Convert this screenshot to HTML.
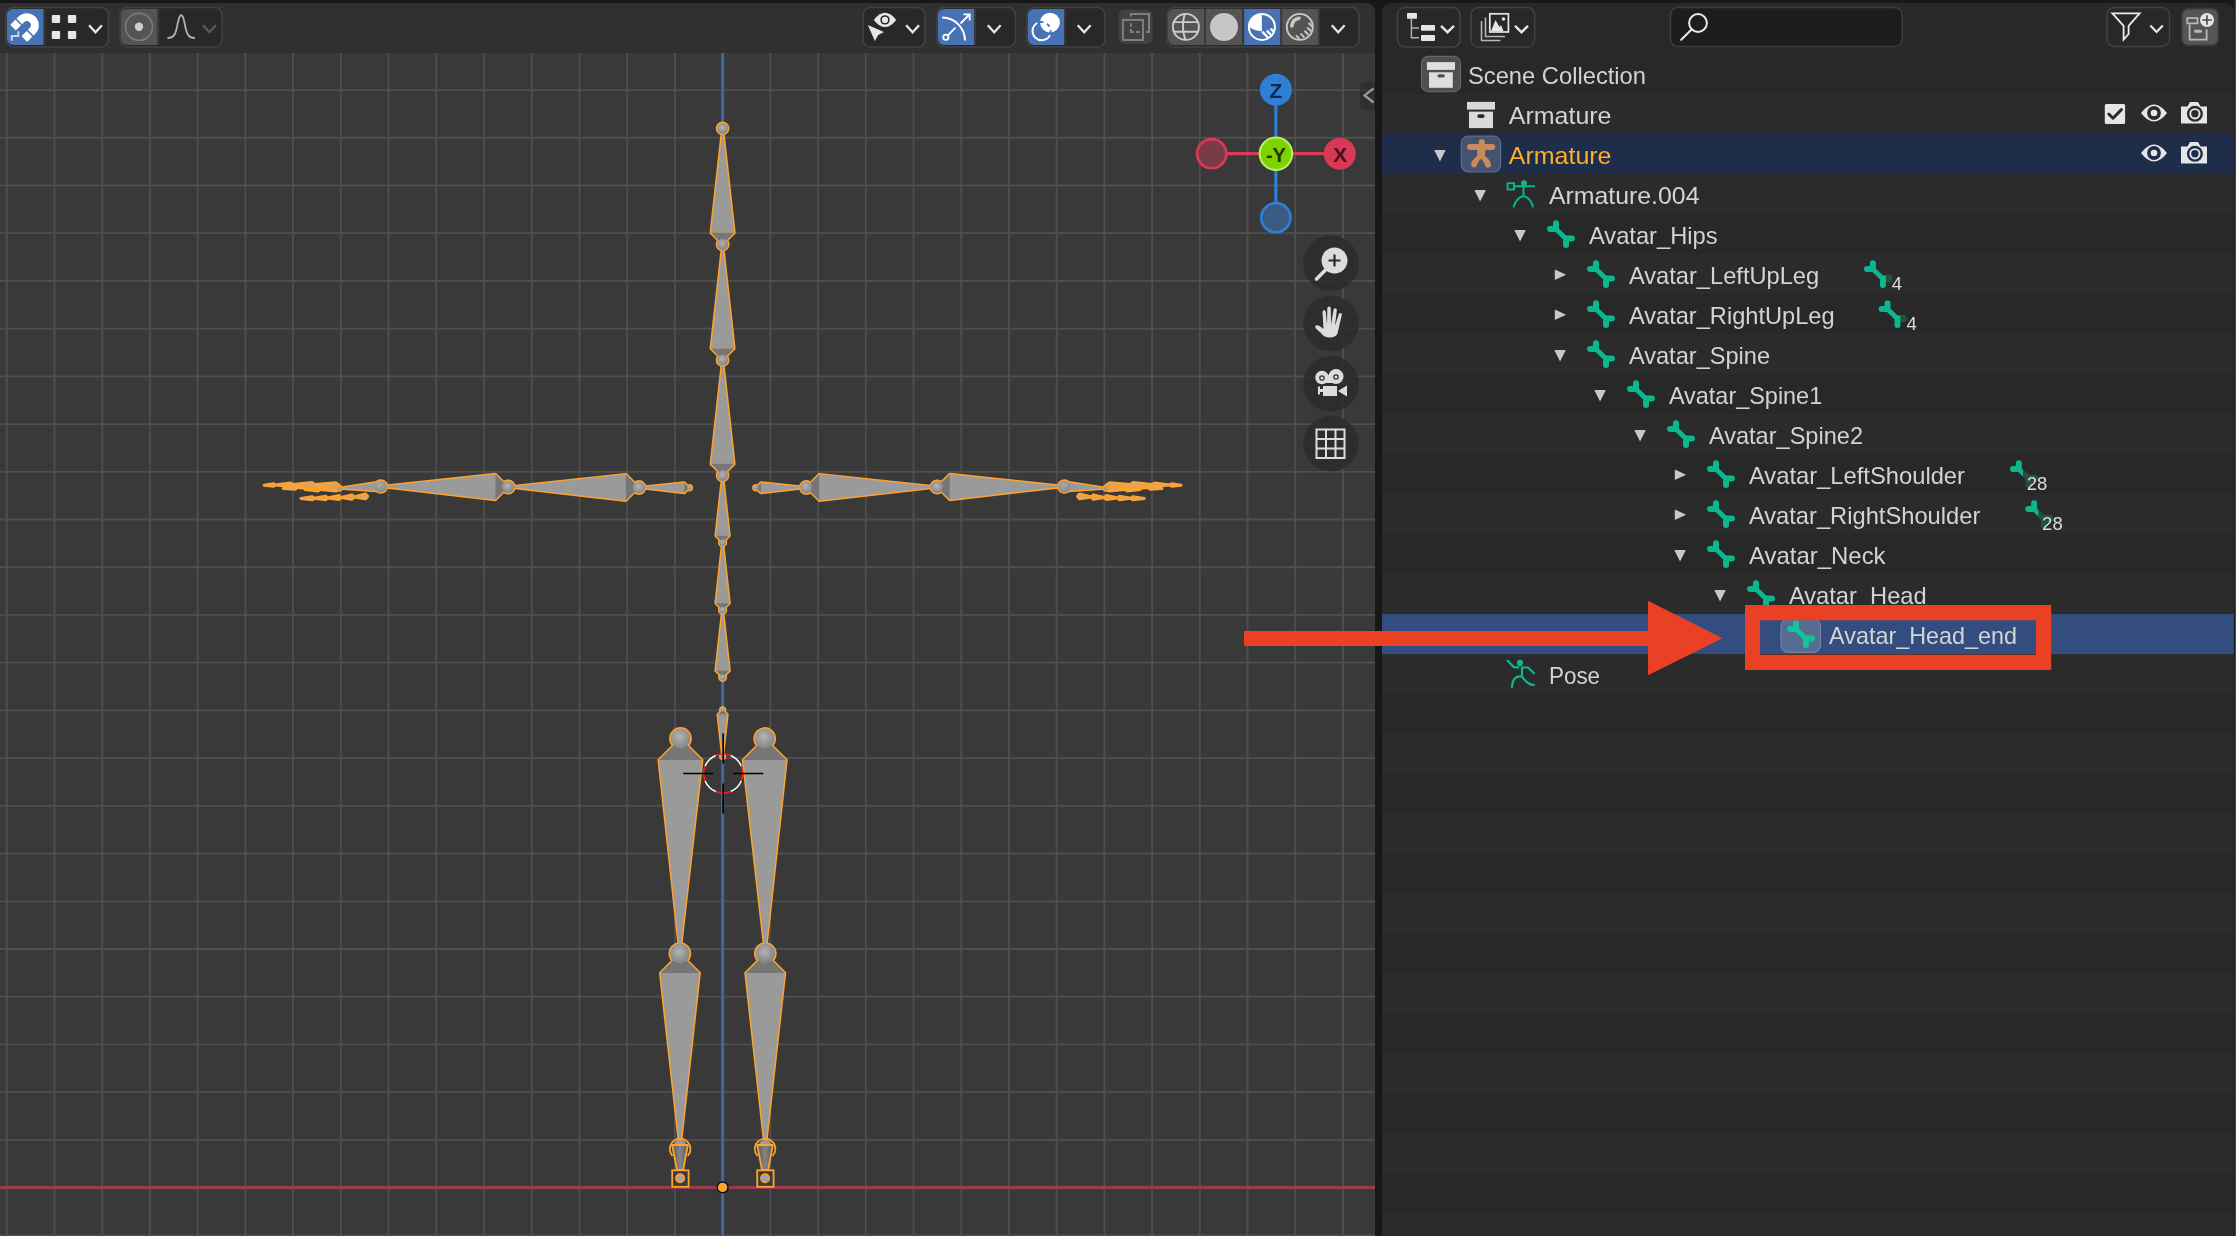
<!DOCTYPE html><html><head><meta charset="utf-8"><title>Blender Outliner</title><style>
html,body{margin:0;padding:0;width:2236px;height:1236px;overflow:hidden;background:#181818;}
svg{position:absolute;left:0;top:0;display:block}
text{font-family:"Liberation Sans",sans-serif;}
.gt{will-change:transform;opacity:0.999}
</style></head><body>
<svg width="2236" height="1236" viewBox="0 0 2236 1236">
<defs>
<clipPath id="vpclip"><rect x="0" y="53" width="1375" height="1183"/></clipPath>
<radialGradient id="joint" cx="0.45" cy="0.4" r="0.6"><stop offset="0" stop-color="#b4b4b4"/><stop offset="1" stop-color="#858585"/></radialGradient>
</defs>
<rect x="0" y="0" width="2236" height="1236" fill="#181818"/>
<path d="M0,3 H1366 A9,9 0 0 1 1375,12 V1236 H0 Z" fill="#393939"/>
<g clip-path="url(#vpclip)">
<path d="M6.8,53V1236M54.52,53V1236M102.24,53V1236M149.96,53V1236M197.68,53V1236M245.4,53V1236M293.12,53V1236M340.84,53V1236M388.56,53V1236M436.28,53V1236M484,53V1236M531.72,53V1236M579.44,53V1236M627.16,53V1236M674.88,53V1236M722.6,53V1236M770.32,53V1236M818.04,53V1236M865.76,53V1236M913.48,53V1236M961.2,53V1236M1008.92,53V1236M1056.64,53V1236M1104.36,53V1236M1152.08,53V1236M1199.8,53V1236M1247.52,53V1236M1295.24,53V1236M1342.96,53V1236M0,90.04H1375M0,137.76H1375M0,185.48H1375M0,233.2H1375M0,280.92H1375M0,328.64H1375M0,376.36H1375M0,424.08H1375M0,471.8H1375M0,519.52H1375M0,567.24H1375M0,614.96H1375M0,662.68H1375M0,710.4H1375M0,758.12H1375M0,805.84H1375M0,853.56H1375M0,901.28H1375M0,949H1375M0,996.72H1375M0,1044.44H1375M0,1092.16H1375M0,1139.88H1375M0,1187.6H1375M0,1235.32H1375" stroke="#4f4f4f" stroke-width="1.8" fill="none"/>
<line x1="722.6" y1="53" x2="722.6" y2="1236" stroke="#3b6aa3" stroke-width="3"/>
<line x1="0" y1="1187.6" x2="1375" y2="1187.6" stroke="#9c3b4e" stroke-width="3"/>
</g>
<g fill="#ffa22e" stroke="#ffa22e" stroke-width="3.0" stroke-linejoin="round">
<polygon points="722.6,677.3 729.33,670.57 722.6,610 715.87,670.57"/><circle cx="722.6" cy="677.3" r="3.1"/><circle cx="722.6" cy="610" r="3.1"/><polygon points="722.6,610 729.35,603.25 722.6,542.5 715.85,603.25"/><circle cx="722.6" cy="610" r="3.1"/><circle cx="722.6" cy="542.5" r="3.1"/><polygon points="722.6,542.5 729.31,535.79 722.6,475.4 715.89,535.79"/><circle cx="722.6" cy="542.5" r="3.09"/><circle cx="722.6" cy="475.4" r="3.09"/><polygon points="722.6,475.4 734.14,463.86 722.6,360 711.06,463.86"/><circle cx="722.6" cy="475.4" r="5.31"/><circle cx="722.6" cy="360" r="5.31"/><polygon points="722.6,360 734.16,348.44 722.6,244.4 711.04,348.44"/><circle cx="722.6" cy="360" r="5.32"/><circle cx="722.6" cy="244.4" r="5.32"/><polygon points="722.6,244.4 734.2,232.8 722.6,128.4 711,232.8"/><circle cx="722.6" cy="244.4" r="5.34"/><circle cx="722.6" cy="128.4" r="5.34"/><polygon points="722.6,709.8 717.95,714.45 722.6,756.3 727.25,714.45"/><circle cx="722.6" cy="709.8" r="2.14"/><circle cx="722.6" cy="756.3" r="2.14"/><polygon points="689.3,487.8 684.29,482.73 638.9,487.5 684.23,492.81"/><circle cx="689.3" cy="487.8" r="2.32"/><circle cx="638.9" cy="487.5" r="2.32"/><polygon points="755.9,487.8 760.97,492.81 806.3,487.5 760.91,482.73"/><circle cx="755.9" cy="487.8" r="2.32"/><circle cx="806.3" cy="487.5" r="2.32"/><polygon points="638.9,487.5 625.87,474.37 508.1,487 625.77,500.53"/><circle cx="638.9" cy="487.5" r="6.02"/><circle cx="508.1" cy="487" r="6.02"/><polygon points="806.3,487.5 819.43,500.53 937.1,487 819.33,474.37"/><circle cx="806.3" cy="487.5" r="6.02"/><circle cx="937.1" cy="487" r="6.02"/><polygon points="508.1,487 495.42,474.22 380.8,486.5 495.32,499.68"/><circle cx="508.1" cy="487" r="5.86"/><circle cx="380.8" cy="486.5" r="5.86"/><polygon points="937.1,487 949.88,499.68 1064.4,486.5 949.78,474.22"/><circle cx="937.1" cy="487" r="5.86"/><circle cx="1064.4" cy="486.5" r="5.86"/><polygon points="380.8,486.5 376.47,482.53 339.3,488.3 376.83,490.83"/><circle cx="380.8" cy="486.5" r="1.91"/><circle cx="339.3" cy="488.3" r="1.91"/><polygon points="1064.4,486.5 1068.37,490.83 1105.9,488.3 1068.73,482.53"/><circle cx="1064.4" cy="486.5" r="1.91"/><circle cx="1105.9" cy="488.3" r="1.91"/><polygon points="680.5,738.5 658.93,759.95 679.9,953.6 701.95,760.07"/><circle cx="680.5" cy="738.5" r="9.89"/><circle cx="679.9" cy="953.6" r="9.89"/><polygon points="764.7,738.5 743.25,760.07 765.3,953.6 786.27,759.95"/><circle cx="764.7" cy="738.5" r="9.89"/><circle cx="765.3" cy="953.6" r="9.89"/><polygon points="679.9,953.6 660.42,973.1 680,1148.5 699.4,973.08"/><circle cx="679.9" cy="953.6" r="8.97"/><polygon points="765.3,953.6 745.8,973.08 765.2,1148.5 784.78,973.1"/><circle cx="765.3" cy="953.6" r="8.97"/>
<polygon points="1106,485.3 1109.6,482.8 1130,484.6 1109.6,487.59"/>
<polygon points="339.2,485.3 335.6,482.8 315.2,484.6 335.6,487.59"/>
<polygon points="1130,484.6 1133.3,482.5 1152,484.6 1133.3,486.7"/>
<polygon points="315.2,484.6 311.9,482.5 293.2,484.6 311.9,486.7"/>
<polygon points="1152,484.6 1154.7,482.96 1170,485 1154.7,486.36"/>
<polygon points="293.2,484.6 290.5,482.96 275.2,485 290.5,486.36"/>
<polygon points="1170,485 1171.65,483.85 1181,485.3 1171.65,486.25"/>
<polygon points="275.2,485 273.55,483.85 264.2,485.3 273.55,486.25"/>
<polygon points="1106,487.6 1109.3,485.04 1128,487.2 1109.3,490.04"/>
<polygon points="339.2,487.6 335.9,485.04 317.2,487.2 335.9,490.04"/>
<polygon points="1128,487.2 1131,485.16 1148,487.6 1131,489.36"/>
<polygon points="317.2,487.2 314.2,485.16 297.2,487.6 314.2,489.36"/>
<polygon points="1148,487.6 1150.1,486.12 1162,488.4 1150.1,489.32"/>
<polygon points="297.2,487.6 295.1,486.12 283.2,488.4 295.1,489.32"/>
<polygon points="1106,489.2 1108.85,487.46 1125,489.6 1108.85,491.06"/>
<polygon points="339.2,489.2 336.35,487.46 320.2,489.6 336.35,491.06"/>
<polygon points="1125,489.6 1127.25,488.2 1140,489.6 1127.25,491"/>
<polygon points="320.2,489.6 317.95,488.2 305.2,489.6 317.95,491"/>
<polygon points="1077.5,496.2 1079.59,493.92 1091.4,497 1079.59,498.72"/>
<polygon points="367.7,496.2 365.62,493.92 353.8,497 365.62,498.72"/>
<polygon points="1091.4,497 1093.32,494.88 1104.2,497.5 1093.32,499.27"/>
<polygon points="353.8,497 351.88,494.88 341,497.5 351.88,499.27"/>
<polygon points="1104.2,497.5 1106.21,495.57 1117.6,498 1106.21,499.57"/>
<polygon points="341,497.5 338.99,495.57 327.6,498 338.99,499.57"/>
<polygon points="1117.6,498 1119.6,496.23 1130.9,498.2 1119.6,499.83"/>
<polygon points="327.6,498 325.61,496.23 314.3,498.2 325.61,499.83"/>
<polygon points="1130.9,498.2 1132.91,496.73 1144.3,498.4 1132.91,499.73"/>
<polygon points="314.3,498.2 312.29,496.73 300.9,498.4 312.29,499.73"/>
</g>
<polygon points="729.33,670.57 722.6,610 715.87,670.57" fill="#9a9a9a"/><polygon points="722.6,677.3 729.33,670.57 715.87,670.57" fill="#767676"/><polygon points="729.35,603.25 722.6,542.5 715.85,603.25" fill="#9a9a9a"/><polygon points="722.6,610 729.35,603.25 715.85,603.25" fill="#767676"/><polygon points="729.31,535.79 722.6,475.4 715.89,535.79" fill="#9a9a9a"/><polygon points="722.6,542.5 729.31,535.79 715.89,535.79" fill="#767676"/><polygon points="734.14,463.86 722.6,360 711.06,463.86" fill="#9a9a9a"/><polygon points="722.6,475.4 734.14,463.86 711.06,463.86" fill="#767676"/><polygon points="734.16,348.44 722.6,244.4 711.04,348.44" fill="#9a9a9a"/><polygon points="722.6,360 734.16,348.44 711.04,348.44" fill="#767676"/><polygon points="734.2,232.8 722.6,128.4 711,232.8" fill="#9a9a9a"/><polygon points="722.6,244.4 734.2,232.8 711,232.8" fill="#767676"/><polygon points="717.95,714.45 722.6,756.3 727.25,714.45" fill="#9a9a9a"/><polygon points="722.6,709.8 717.95,714.45 727.25,714.45" fill="#767676"/><polygon points="684.29,482.73 638.9,487.5 684.23,492.81" fill="#9a9a9a"/><polygon points="689.3,487.8 684.29,482.73 684.23,492.81" fill="#767676"/><polygon points="760.97,492.81 806.3,487.5 760.91,482.73" fill="#9a9a9a"/><polygon points="755.9,487.8 760.97,492.81 760.91,482.73" fill="#767676"/><polygon points="625.87,474.37 508.1,487 625.77,500.53" fill="#9a9a9a"/><polygon points="638.9,487.5 625.87,474.37 625.77,500.53" fill="#767676"/><polygon points="819.43,500.53 937.1,487 819.33,474.37" fill="#9a9a9a"/><polygon points="806.3,487.5 819.43,500.53 819.33,474.37" fill="#767676"/><polygon points="495.42,474.22 380.8,486.5 495.32,499.68" fill="#9a9a9a"/><polygon points="508.1,487 495.42,474.22 495.32,499.68" fill="#767676"/><polygon points="949.88,499.68 1064.4,486.5 949.78,474.22" fill="#9a9a9a"/><polygon points="937.1,487 949.88,499.68 949.78,474.22" fill="#767676"/><polygon points="376.47,482.53 339.3,488.3 376.83,490.83" fill="#9a9a9a"/><polygon points="380.8,486.5 376.47,482.53 376.83,490.83" fill="#767676"/><polygon points="1068.37,490.83 1105.9,488.3 1068.73,482.53" fill="#9a9a9a"/><polygon points="1064.4,486.5 1068.37,490.83 1068.73,482.53" fill="#767676"/><polygon points="658.93,759.95 679.9,953.6 701.95,760.07" fill="#9a9a9a"/><polygon points="680.5,738.5 658.93,759.95 701.95,760.07" fill="#767676"/><polygon points="743.25,760.07 765.3,953.6 786.27,759.95" fill="#9a9a9a"/><polygon points="764.7,738.5 743.25,760.07 786.27,759.95" fill="#767676"/><polygon points="660.42,973.1 680,1148.5 699.4,973.08" fill="#9a9a9a"/><polygon points="679.9,953.6 660.42,973.1 699.4,973.08" fill="#767676"/><polygon points="745.8,973.08 765.2,1148.5 784.78,973.1" fill="#9a9a9a"/><polygon points="765.3,953.6 745.8,973.08 784.78,973.1" fill="#767676"/>
<g fill="url(#joint)"><circle cx="722.6" cy="677.3" r="3.1"/><circle cx="722.6" cy="610" r="3.1"/><circle cx="722.6" cy="610" r="3.1"/><circle cx="722.6" cy="542.5" r="3.1"/><circle cx="722.6" cy="542.5" r="3.09"/><circle cx="722.6" cy="475.4" r="3.09"/><circle cx="722.6" cy="475.4" r="5.31"/><circle cx="722.6" cy="360" r="5.31"/><circle cx="722.6" cy="360" r="5.32"/><circle cx="722.6" cy="244.4" r="5.32"/><circle cx="722.6" cy="244.4" r="5.34"/><circle cx="722.6" cy="128.4" r="5.34"/><circle cx="722.6" cy="709.8" r="2.14"/><circle cx="722.6" cy="756.3" r="2.14"/><circle cx="689.3" cy="487.8" r="2.32"/><circle cx="638.9" cy="487.5" r="2.32"/><circle cx="755.9" cy="487.8" r="2.32"/><circle cx="806.3" cy="487.5" r="2.32"/><circle cx="638.9" cy="487.5" r="6.02"/><circle cx="508.1" cy="487" r="6.02"/><circle cx="806.3" cy="487.5" r="6.02"/><circle cx="937.1" cy="487" r="6.02"/><circle cx="508.1" cy="487" r="5.86"/><circle cx="380.8" cy="486.5" r="5.86"/><circle cx="937.1" cy="487" r="5.86"/><circle cx="1064.4" cy="486.5" r="5.86"/><circle cx="380.8" cy="486.5" r="1.91"/><circle cx="339.3" cy="488.3" r="1.91"/><circle cx="1064.4" cy="486.5" r="1.91"/><circle cx="1105.9" cy="488.3" r="1.91"/><circle cx="680.5" cy="738.5" r="9.89"/><circle cx="679.9" cy="953.6" r="9.89"/><circle cx="764.7" cy="738.5" r="9.89"/><circle cx="765.3" cy="953.6" r="9.89"/><circle cx="679.9" cy="953.6" r="8.97"/><circle cx="765.3" cy="953.6" r="8.97"/></g>
<polygon points="1106,485.3 1109.6,484.12 1130,484.6 1109.6,486.27" fill="#a8a8a8" opacity="0.55"/>
<polygon points="339.2,485.3 335.6,484.12 315.2,484.6 335.6,486.27" fill="#a8a8a8" opacity="0.55"/>
<polygon points="1130,484.6 1133.3,483.66 1152,484.6 1133.3,485.55" fill="#a8a8a8" opacity="0.55"/>
<polygon points="315.2,484.6 311.9,483.66 293.2,484.6 311.9,485.55" fill="#a8a8a8" opacity="0.55"/>
<polygon points="1152,484.6 1154.7,483.9 1170,485 1154.7,485.43" fill="#a8a8a8" opacity="0.55"/>
<polygon points="293.2,484.6 290.5,483.9 275.2,485 290.5,485.43" fill="#a8a8a8" opacity="0.55"/>
<polygon points="1170,485 1171.65,484.5 1181,485.3 1171.65,485.59" fill="#a8a8a8" opacity="0.55"/>
<polygon points="275.2,485 273.55,484.5 264.2,485.3 273.55,485.59" fill="#a8a8a8" opacity="0.55"/>
<polygon points="1106,487.6 1109.3,486.42 1128,487.2 1109.3,488.67" fill="#a8a8a8" opacity="0.55"/>
<polygon points="339.2,487.6 335.9,486.42 317.2,487.2 335.9,488.67" fill="#a8a8a8" opacity="0.55"/>
<polygon points="1128,487.2 1131,486.31 1148,487.6 1131,488.2" fill="#a8a8a8" opacity="0.55"/>
<polygon points="317.2,487.2 314.2,486.31 297.2,487.6 314.2,488.2" fill="#a8a8a8" opacity="0.55"/>
<polygon points="1148,487.6 1150.1,487 1162,488.4 1150.1,488.44" fill="#a8a8a8" opacity="0.55"/>
<polygon points="297.2,487.6 295.1,487 283.2,488.4 295.1,488.44" fill="#a8a8a8" opacity="0.55"/>
<polygon points="1106,489.2 1108.85,488.45 1125,489.6 1108.85,490.07" fill="#a8a8a8" opacity="0.55"/>
<polygon points="339.2,489.2 336.35,488.45 320.2,489.6 336.35,490.07" fill="#a8a8a8" opacity="0.55"/>
<polygon points="1125,489.6 1127.25,488.97 1140,489.6 1127.25,490.23" fill="#a8a8a8" opacity="0.55"/>
<polygon points="320.2,489.6 317.95,488.97 305.2,489.6 317.95,490.23" fill="#a8a8a8" opacity="0.55"/>
<polygon points="1077.5,496.2 1079.59,495.24 1091.4,497 1079.59,497.4" fill="#a8a8a8" opacity="0.55"/>
<polygon points="367.7,496.2 365.62,495.24 353.8,497 365.62,497.4" fill="#a8a8a8" opacity="0.55"/>
<polygon points="1091.4,497 1093.32,496.08 1104.2,497.5 1093.32,498.06" fill="#a8a8a8" opacity="0.55"/>
<polygon points="353.8,497 351.88,496.08 341,497.5 351.88,498.06" fill="#a8a8a8" opacity="0.55"/>
<polygon points="1104.2,497.5 1106.21,496.68 1117.6,498 1106.21,498.47" fill="#a8a8a8" opacity="0.55"/>
<polygon points="341,497.5 338.99,496.68 327.6,498 338.99,498.47" fill="#a8a8a8" opacity="0.55"/>
<polygon points="1117.6,498 1119.6,497.22 1130.9,498.2 1119.6,498.84" fill="#a8a8a8" opacity="0.55"/>
<polygon points="327.6,498 325.61,497.22 314.3,498.2 325.61,498.84" fill="#a8a8a8" opacity="0.55"/>
<polygon points="1130.9,498.2 1132.91,497.55 1144.3,498.4 1132.91,498.9" fill="#a8a8a8" opacity="0.55"/>
<polygon points="314.3,498.2 312.29,497.55 300.9,498.4 312.29,498.9" fill="#a8a8a8" opacity="0.55"/>
<linearGradient id="footg" x1="0" x2="1" y1="0" y2="0"><stop offset="0" stop-color="#5a5a5a"/><stop offset="0.5" stop-color="#858585"/><stop offset="1" stop-color="#5a5a5a"/></linearGradient>
<path d="M673.9,1145 A6.3,6.3 0 0 1 686.3,1145 Z" fill="#9a9a9a"/>
<path d="M672.55,1156 A10.3,10.3 0 1 1 687.65,1156" fill="none" stroke="#ffa22e" stroke-width="1.7"/>
<polygon points="672.2,1145 687.8,1145 683.2,1170 677,1170" fill="url(#footg)" stroke="#ffa22e" stroke-width="1.8" stroke-linejoin="round"/>
<rect x="672.2" y="1170.3" width="16.4" height="16.5" fill="#3c3c3c" stroke="#ffa22e" stroke-width="1.8"/>
<circle cx="680.1" cy="1178.3" r="4.3" fill="#a4a4a4" stroke="#ffa22e" stroke-width="1.4"/>
<path d="M758.9,1145 A6.3,6.3 0 0 1 771.3,1145 Z" fill="#9a9a9a"/>
<path d="M757.55,1156 A10.3,10.3 0 1 1 772.65,1156" fill="none" stroke="#ffa22e" stroke-width="1.7"/>
<polygon points="757.2,1145 772.8,1145 768.2,1170 762,1170" fill="url(#footg)" stroke="#ffa22e" stroke-width="1.8" stroke-linejoin="round"/>
<rect x="757.2" y="1170.3" width="16.4" height="16.5" fill="#3c3c3c" stroke="#ffa22e" stroke-width="1.8"/>
<circle cx="765.1" cy="1178.3" r="4.3" fill="#a4a4a4" stroke="#ffa22e" stroke-width="1.4"/>
<circle cx="722.6" cy="1187.4" r="5.4" fill="#ffa22e" stroke="#0c0c14" stroke-width="1.4"/>
<path d="M741.22,766.04 A19.5,19.5 0 0 1 741.22,780.96" stroke="#ff1e1e" stroke-width="1.5" fill="none"/><path d="M741.22,780.96 A19.5,19.5 0 0 1 730.66,791.52" stroke="#ffffff" stroke-width="1.5" fill="none"/><path d="M730.66,791.52 A19.5,19.5 0 0 1 715.74,791.52" stroke="#ff1e1e" stroke-width="1.5" fill="none"/><path d="M715.74,791.52 A19.5,19.5 0 0 1 705.18,780.96" stroke="#ffffff" stroke-width="1.5" fill="none"/><path d="M705.18,780.96 A19.5,19.5 0 0 1 705.18,766.04" stroke="#ff1e1e" stroke-width="1.5" fill="none"/><path d="M705.18,766.04 A19.5,19.5 0 0 1 715.74,755.48" stroke="#ffffff" stroke-width="1.5" fill="none"/><path d="M715.74,755.48 A19.5,19.5 0 0 1 730.66,755.48" stroke="#ff1e1e" stroke-width="1.5" fill="none"/><path d="M730.66,755.48 A19.5,19.5 0 0 1 741.22,766.04" stroke="#ffffff" stroke-width="1.5" fill="none"/>
<path d="M683.2,773.5H713.2M733.2,773.5H763.2M723.2,733.5V763.5M723.2,783.5V813.5" stroke="#000" stroke-width="1.6"/>
<line x1="1275.9" y1="89.8" x2="1275.9" y2="217.7" stroke="#2f7fd6" stroke-width="3.2"/>
<line x1="1211.7" y1="153.7" x2="1339.8" y2="153.7" stroke="#d83a55" stroke-width="3.2"/>
<circle cx="1211.7" cy="153.7" r="14.6" fill="#7a3a48" stroke="#d83a55" stroke-width="2.6"/>
<circle cx="1275.9" cy="217.7" r="14.6" fill="#3b5a82" stroke="#2f7fd6" stroke-width="2.6"/>
<circle cx="1275.9" cy="89.8" r="16" fill="#2f7fd6"/>
<circle cx="1339.8" cy="153.7" r="16" fill="#d83a55"/>
<circle cx="1275.9" cy="153.7" r="16.3" fill="#7fd400" stroke="#b5ef6e" stroke-width="2"/>
<text x="1275.9" y="97.8" font-size="21" font-weight="bold" fill="#0f2c4f" text-anchor="middle">Z</text>
<text x="1340" y="161.7" font-size="21" font-weight="bold" fill="#4d0f1a" text-anchor="middle">X</text>
<text x="1275.9" y="161.7" font-size="20" font-weight="bold" fill="#1f3500" text-anchor="middle">-Y</text>
<path d="M1375,82 H1365 A5,5 0 0 0 1360,87 V105 A5,5 0 0 0 1365,110 H1375 Z" fill="#262626" opacity="0.5"/>
<path d="M1373.6,88.3 L1364.6,95.4 L1373.6,102.5" stroke="#9a9a9a" stroke-width="2.3" fill="none"/>
<circle cx="1331" cy="263.2" r="27.8" fill="#2b2b2b" opacity="0.85"/>
<circle cx="1331" cy="323.6" r="27.8" fill="#2b2b2b" opacity="0.85"/>
<circle cx="1331" cy="383.8" r="27.8" fill="#2b2b2b" opacity="0.85"/>
<circle cx="1331" cy="443.6" r="27.8" fill="#2b2b2b" opacity="0.85"/>
<circle cx="1334.5" cy="260.5" r="13" fill="#dcdcdc"/>
<path d="M1328.5,260.5H1340.5M1334.5,254.5V266.5" stroke="#2b2b2b" stroke-width="2.2"/>
<line x1="1316.5" y1="279" x2="1325" y2="270.5" stroke="#dcdcdc" stroke-width="3.6" stroke-linecap="round"/>
<path d="M1321,333 C1316,329 1314,327 1316,325.5 C1318,324.5 1321,327 1323.5,329 L1322.5,312 C1322.5,309.5 1325.5,309.5 1325.8,312 L1327,325 L1327.3,308.5 C1327.5,305.8 1330.7,305.8 1330.8,308.5 L1331,324.5 L1333.5,310 C1334,307.5 1337,307.8 1336.8,310.3 L1335,325.5 L1338.8,314.5 C1339.6,312.2 1342.3,313 1341.7,315.3 L1337.5,333.5 C1335.5,338.8 1324.5,339 1321,333 Z" fill="#dcdcdc"/>
<circle cx="1322" cy="377.5" r="6.8" fill="#dcdcdc"/><circle cx="1336" cy="376.5" r="7.5" fill="#dcdcdc"/>
<rect x="1320" y="375" width="16" height="8" fill="#dcdcdc"/>
<circle cx="1322" cy="378" r="2.2" fill="none" stroke="#2b2b2b" stroke-width="1.2"/><circle cx="1336" cy="377" r="2.2" fill="none" stroke="#2b2b2b" stroke-width="1.2"/>
<rect x="1323" y="386" width="14" height="10" fill="#dcdcdc"/><rect x="1318.5" y="389" width="5" height="3" fill="#dcdcdc"/><rect x="1318" y="386.5" width="2" height="8" fill="#dcdcdc"/>
<polygon points="1338,391 1347,385.5 1347,396.5" fill="#dcdcdc"/>
<path d="M1316.5,429.5H1344.5V458H1316.5Z M1326,429.5V458 M1335.5,429.5V458 M1316.5,439H1344.5 M1316.5,448.5H1344.5" stroke="#dcdcdc" stroke-width="2" fill="none"/>
<path d="M0,3 H1366 A9,9 0 0 1 1375,12 V53 H0 Z" fill="#303030"/>
<rect x="6" y="7.5" width="102.5" height="39.5" rx="7.5" fill="#282828" stroke="#424242" stroke-width="1.6"/>
<path d="M13.2,9.0 H43.5 V45.0 H13.2 A6.2,6.2 0 0 1 7,38.8 V15.2 A6.2,6.2 0 0 1 13.2,9.0 Z" fill="#4772b3"/>
<rect x="43.5" y="9" width="1.8" height="36" fill="#3a3a3a"/>
<g transform="translate(26.8,25.2) rotate(135)" fill="#ffffff">
<path d="M0,-12 A12,12 0 0 0 0,12 L2.6,12 L2.6,4 L0,4 A4,4 0 0 1 0,-4 L2.6,-4 L2.6,-12 Z"/>
<rect x="4.1" y="-12" width="7.4" height="8" rx="0.6"/><rect x="4.1" y="4" width="7.4" height="8" rx="0.6"/>
</g>
<path d="M11.8,40.8 V36 H18.3 V31.3" stroke="#c5d2ea" stroke-width="2" fill="none"/>
<rect x="51.8" y="15.0" width="8.3" height="7.9" rx="0.8" fill="#e6e6e6"/>
<rect x="51.8" y="31.1" width="8.3" height="7.9" rx="0.8" fill="#e6e6e6"/>
<rect x="67.9" y="15.0" width="8.3" height="7.9" rx="0.8" fill="#e6e6e6"/>
<rect x="67.9" y="31.1" width="8.3" height="7.9" rx="0.8" fill="#e6e6e6"/>
<path d="M89.05,25.3 L95.5,32.2 L101.95,25.3" stroke="#e6e6e6" stroke-width="2.3" fill="none"/>
<rect x="120" y="7.5" width="102" height="39.5" rx="7.5" fill="#282828" stroke="#424242" stroke-width="1.6"/>
<path d="M127.2,9.0 H157.5 V45.0 H127.2 A6.2,6.2 0 0 1 121,38.8 V15.2 A6.2,6.2 0 0 1 127.2,9.0 Z" fill="#545454"/>
<rect x="157.5" y="9" width="1.8" height="36" fill="#3a3a3a"/>
<circle cx="139" cy="26.8" r="13.5" fill="none" stroke="#7d7d7d" stroke-width="1.5"/>
<circle cx="139" cy="26.8" r="4.2" fill="#cfcfcf"/>
<path d="M167.5,38 C174,38 175.5,34 177,27 C178.5,19.5 179.5,15.2 181.2,15.2 C182.9,15.2 183.9,19.5 185.4,27 C186.9,34 188.4,38 195,38" stroke="#b0b0b0" stroke-width="1.8" fill="none"/>
<path d="M203.05,25.3 L209.5,32.2 L215.95,25.3" stroke="#5a5a5a" stroke-width="2.2" fill="none"/>
<rect x="863" y="7.5" width="62" height="39.5" rx="7.5" fill="#282828" stroke="#424242" stroke-width="1.6"/>
<path d="M873.8,19.9 Q885,5.6 896.2,19.9 Q885,34.2 873.8,19.9 Z" fill="#e6e6e6"/>
<circle cx="885" cy="19.9" r="4.7" fill="#282828"/><circle cx="885" cy="19.9" r="3.1" fill="#e6e6e6"/>
<polygon points="867.8,25 874.9,41.1 878.2,34.9 884,32" fill="#e6e6e6"/>
<path d="M906.15,25.3 L912.6,32.2 L919.0500000000001,25.3" stroke="#e6e6e6" stroke-width="2.3" fill="none"/>
<rect x="937" y="7.5" width="78.5" height="39.5" rx="7.5" fill="#282828" stroke="#424242" stroke-width="1.6"/>
<path d="M944.2,9.0 H974.2 V45.0 H944.2 A6.2,6.2 0 0 1 938,38.8 V15.2 A6.2,6.2 0 0 1 944.2,9.0 Z" fill="#4772b3"/>
<rect x="974.2" y="9" width="1.8" height="36" fill="#3a3a3a"/>
<path d="M942.2,17.6 A23,23 0 0 1 965,40.5" stroke="#ffffff" stroke-width="2" fill="none"/>
<circle cx="945.8" cy="37.3" r="2.6" fill="none" stroke="#ffffff" stroke-width="1.8"/>
<line x1="947.8" y1="35.3" x2="955.5" y2="27.6" stroke="#ffffff" stroke-width="1.8"/>
<path d="M960.5,23.5 L969.5,14.5 M963.5,14.3 H969.7 V20.5" stroke="#ffffff" stroke-width="1.8" fill="none"/>
<path d="M987.75,25.3 L994.2,32.2 L1000.6500000000001,25.3" stroke="#e6e6e6" stroke-width="2.3" fill="none"/>
<rect x="1027" y="7.5" width="78" height="39.5" rx="7.5" fill="#282828" stroke="#424242" stroke-width="1.6"/>
<path d="M1034.2,9.0 H1064.2 V45.0 H1034.2 A6.2,6.2 0 0 1 1028,38.8 V15.2 A6.2,6.2 0 0 1 1034.2,9.0 Z" fill="#4772b3"/>
<rect x="1064.2" y="9" width="1.8" height="36" fill="#3a3a3a"/>
<circle cx="1050" cy="22.6" r="9.9" fill="#ffffff"/>
<path d="M1050,35.1 A9.2,9.2 0 1 1 1037.2,23" stroke="#ffffff" stroke-width="2" fill="none"/>
<path d="M1039.9,22 A9.2,9.2 0 0 1 1050.4,33.5" stroke="#4772b3" stroke-width="1.9" stroke-dasharray="3.6,3.9" fill="none"/>
<path d="M1077.75,25.3 L1084.2,32.2 L1090.65,25.3" stroke="#e6e6e6" stroke-width="2.3" fill="none"/>
<rect x="1118" y="9" width="35.5" height="35.7" rx="6.5" fill="#414141" stroke="#2f2f2f" stroke-width="1.4"/>
<path d="M1130.9,16.8 V14.1 H1149 V32 H1146.2" stroke="#7e7e7e" stroke-width="2" fill="none"/>
<rect x="1122.9" y="19.9" width="20.1" height="20.1" fill="none" stroke="#7e7e7e" stroke-width="2"/>
<path d="M1130.9,23.2 V26.8 M1130.9,29 V32 H1133.8 M1136,32 H1139.9" stroke="#7e7e7e" stroke-width="2" fill="none"/>
<rect x="1167" y="7.5" width="192" height="39.5" rx="7.5" fill="#282828" stroke="#424242" stroke-width="1.6"/>
<path d="M1174.2,9.0 H1204.5 V45.0 H1174.2 A6.2,6.2 0 0 1 1168,38.8 V15.2 A6.2,6.2 0 0 1 1174.2,9.0 Z" fill="#545454"/>
<path d="M1206,9.0 H1242.5 V45.0 H1206 V9.0 Z" fill="#545454"/>
<path d="M1244,9.0 H1280.5 V45.0 H1244 V9.0 Z" fill="#4772b3"/>
<path d="M1282,9.0 H1318.5 V45.0 H1282 V9.0 Z" fill="#545454"/>
<rect x="1204.5" y="8.6" width="1.6" height="37.3" fill="#383838"/>
<rect x="1242.5" y="8.6" width="1.6" height="37.3" fill="#383838"/>
<rect x="1280.5" y="8.6" width="1.6" height="37.3" fill="#383838"/>
<rect x="1318.5" y="8.6" width="1.6" height="37.3" fill="#383838"/>
<g stroke="#cdcdcd" stroke-width="1.9" fill="none"><circle cx="1185.9" cy="26.9" r="13"/><path d="M1174,22.1 H1197.8 M1174,31.8 H1197.8 M1184.6,14 Q1181,26.9 1185.3,39.8"/></g>
<circle cx="1224" cy="27" r="14" fill="#c6c6c6"/>
<circle cx="1261.9" cy="26.9" r="13" fill="none" stroke="#ffffff" stroke-width="2"/>
<path d="M1261.9,14 V31.2 Q1254,30.5 1249.6,27.2 A12.5,12.5 0 0 1 1261.9,14 Z" fill="#ffffff"/>
<path d="M1262.2,31.6 L1268,37.6 M1266.8,30.6 L1272,36 M1270.6,28.6 L1274.2,32.2" stroke="#ffffff" stroke-width="2.3"/>
<circle cx="1299.8" cy="26.9" r="13" fill="none" stroke="#c9c9c9" stroke-width="1.9"/>
<path d="M1291.8,26 Q1292.5,19.5 1298.9,18.2" stroke="#c9c9c9" stroke-width="3.6" stroke-linecap="round" fill="none"/>
<path d="M1296,35.4 L1299.4,38.8 M1300.6,33.6 L1304.4,37.4 M1304.4,30.8 L1308.4,34.8 M1307.2,27.4 L1311,31.2 M1308.6,23 L1312.2,26.6" stroke="#c9c9c9" stroke-width="2"/>
<path d="M1331.75,25.3 L1338.2,32.2 L1344.65,25.3" stroke="#e6e6e6" stroke-width="2.3" fill="none"/>
<path d="M1391,3 H2224.8 A9,9 0 0 1 2233.8,12 V1236 H1382 V12 A9,9 0 0 1 1391,3 Z" fill="#282828"/>
<rect x="2234.8" y="0" width="1.2" height="1236" fill="#474747"/>
<rect x="1382" y="94" width="851.8" height="40" fill="#2b2b2b"/>
<rect x="1382" y="174" width="851.8" height="40" fill="#2b2b2b"/>
<rect x="1382" y="254" width="851.8" height="40" fill="#2b2b2b"/>
<rect x="1382" y="334" width="851.8" height="40" fill="#2b2b2b"/>
<rect x="1382" y="414" width="851.8" height="40" fill="#2b2b2b"/>
<rect x="1382" y="494" width="851.8" height="40" fill="#2b2b2b"/>
<rect x="1382" y="574" width="851.8" height="40" fill="#2b2b2b"/>
<rect x="1382" y="654" width="851.8" height="40" fill="#2b2b2b"/>
<rect x="1382" y="734" width="851.8" height="40" fill="#2b2b2b"/>
<rect x="1382" y="814" width="851.8" height="40" fill="#2b2b2b"/>
<rect x="1382" y="894" width="851.8" height="40" fill="#2b2b2b"/>
<rect x="1382" y="974" width="851.8" height="40" fill="#2b2b2b"/>
<rect x="1382" y="1054" width="851.8" height="40" fill="#2b2b2b"/>
<rect x="1382" y="1134" width="851.8" height="40" fill="#2b2b2b"/>
<rect x="1382" y="1214" width="851.8" height="40" fill="#2b2b2b"/>
<rect x="1382" y="134" width="851.8" height="40" fill="#1d2d4a"/>
<rect x="1382" y="614" width="851.8" height="40" fill="#334d80"/>
<rect x="1421.5" y="56.3" width="39" height="35.4" rx="7" fill="#4f4f4f" stroke="#666666" stroke-width="1.2"/>
<rect x="1426.9" y="62.1" width="28.1" height="7.8" fill="#dedede"/>
<rect x="1429" y="72.3" width="23.8" height="15.5" fill="#dedede"/>
<rect x="1437.5" y="74.2" width="7.3" height="3.4" rx="1.7" fill="#4f4f4f"/>
<text class="gt" x="1468" y="84.1" font-size="23.4" fill="#d4d4d4" textLength="178" lengthAdjust="spacingAndGlyphs">Scene Collection</text>
<rect x="1467" y="101.9" width="28" height="7.7" fill="#d9d9d9"/>
<rect x="1469" y="111.60000000000001" width="24" height="16.5" fill="#d9d9d9"/>
<rect x="1477.3" y="114.30000000000001" width="7.3" height="3.6" rx="1.8" fill="#282828"/>
<text class="gt" x="1508.8" y="123.6" font-size="23.4" fill="#d4d4d4" textLength="102.7" lengthAdjust="spacingAndGlyphs">Armature</text>
<rect x="2104.8" y="104" width="20.3" height="20" rx="1.5" fill="#e6e6e6"/>
<path d="M2108.8,114 L2113,118.2 L2121.4,109.6" stroke="#2b2b2b" stroke-width="3" stroke-linecap="round" stroke-linejoin="round" fill="none"/>
<path d="M2141,113 Q2154,96 2167,113 Q2154,130 2141,113 Z" fill="#e6e6e6"/>
<circle cx="2154" cy="113" r="6.9" fill="#2b2b2b"/><circle cx="2154" cy="113" r="3.3" fill="#e6e6e6"/>
<path d="M2181,106.6 H2187.5 L2190,102.1 H2198 L2200.5,106.6 H2207 V123.6 H2181 Z" fill="#e6e6e6"/>
<circle cx="2194.9" cy="113.8" r="8" fill="#2b2b2b"/><circle cx="2194.9" cy="113.8" r="5.6" fill="#e6e6e6"/><circle cx="2194.9" cy="113.8" r="3.7" fill="#2b2b2b"/>
<polygon points="1434.2,150 1445.7,150 1439.95,161.6" fill="#c8c8c8"/>
<rect x="1461.3" y="136.1" width="39.3" height="35.7" rx="7" fill="#44546e" stroke="#5d6d88" stroke-width="1.2"/>
<g fill="#c98b5b"><circle cx="1481.8" cy="142.4" r="3.1"/><rect x="1467" y="144.1" width="28.2" height="5.9" rx="2.95"/>
<path d="M1477,147 H1485.5 L1485,156 Q1490.5,160 1491,164.5 A3,3 0 0 1 1485.3,166 Q1483.5,160.5 1481,158.8 Q1478.5,160.5 1476.5,166 A3,3 0 0 1 1471,164.5 Q1471.5,160 1477.2,156 Z"/></g>
<text class="gt" x="1508.8" y="163.6" font-size="23.4" fill="#ffaf29" textLength="102.7" lengthAdjust="spacingAndGlyphs">Armature</text>
<path d="M2141,153 Q2154,136 2167,153 Q2154,170 2141,153 Z" fill="#e6e6e6"/>
<circle cx="2154" cy="153" r="6.9" fill="#1d2d4a"/><circle cx="2154" cy="153" r="3.3" fill="#e6e6e6"/>
<path d="M2181,146.6 H2187.5 L2190,142.1 H2198 L2200.5,146.6 H2207 V163.6 H2181 Z" fill="#e6e6e6"/>
<circle cx="2194.9" cy="153.79999999999998" r="8" fill="#1d2d4a"/><circle cx="2194.9" cy="153.79999999999998" r="5.6" fill="#e6e6e6"/><circle cx="2194.9" cy="153.79999999999998" r="3.7" fill="#1d2d4a"/>
<polygon points="1474.4,190 1485.9,190 1480.15,201.6" fill="#c8c8c8"/>
<g stroke="#0cb68e" stroke-width="1.9" fill="none"><rect x="1507.6" y="183.2" width="6.5" height="6.3"/>
<path d="M1514,186.3 H1535 M1523.5,186 V197 M1513.5,207.5 Q1516,198 1523.5,196 Q1531,198 1533,207.5"/></g>
<circle cx="1524" cy="183.2" r="3" fill="#0cb68e"/>
<text class="gt" x="1548.9" y="203.6" font-size="23.4" fill="#d4d4d4" textLength="150.6" lengthAdjust="spacingAndGlyphs">Armature.004</text>
<polygon points="1514.3,230 1525.8,230 1520.05,241.6" fill="#c8c8c8"/>
<g stroke="#0cb68e" fill="none" stroke-linecap="round">
<path d="M1556,223.2 L1556,228 M1550.1,229 L1555.6,229 M1566,239.5 L1566,245 M1566.1,238.6 L1572,238.6" stroke-width="6"/>
<path d="M1555.1,228.2 L1566.8,239.4" stroke-width="4.9" stroke-linecap="butt"/>
</g>
<text class="gt" x="1588.9" y="243.6" font-size="23.4" fill="#d4d4d4" textLength="128.7" lengthAdjust="spacingAndGlyphs">Avatar_Hips</text>
<polygon points="1554.8,269.5 1566.2,274.8 1554.8,280.1" fill="#c8c8c8"/>
<g stroke="#0cb68e" fill="none" stroke-linecap="round">
<path d="M1596,263.2 L1596,268 M1590.1,269 L1595.6,269 M1606,279.5 L1606,285 M1606.1,278.6 L1612,278.6" stroke-width="6"/>
<path d="M1595.1,268.2 L1606.8,279.4" stroke-width="4.9" stroke-linecap="butt"/>
</g>
<text class="gt" x="1628.9" y="283.6" font-size="23.4" fill="#d4d4d4" textLength="190.3" lengthAdjust="spacingAndGlyphs">Avatar_LeftUpLeg</text>
<clipPath id="cm5"><rect x="1885.9" y="270" width="40" height="24"/></clipPath>
<g stroke="#0cb68e" fill="none" stroke-linecap="round">
<path d="M1872.9,263.2 L1872.9,268 M1867,269 L1872.5,269 M1882.9,279.5 L1882.9,285 M1883,278.6 L1888.9,278.6" stroke-width="6"/>
<path d="M1872,268.2 L1883.7,279.4" stroke-width="4.9" stroke-linecap="butt"/>
</g>
<g stroke="#21503f" fill="none" stroke-linecap="round" clip-path="url(#cm5)">
<path d="M1872.9,263.2 L1872.9,268 M1867,269 L1872.5,269 M1882.9,279.5 L1882.9,285 M1883,278.6 L1888.9,278.6" stroke-width="6"/>
<path d="M1872,268.2 L1883.7,279.4" stroke-width="4.9" stroke-linecap="butt"/>
</g>
<text x="1891.8" y="289.8" font-size="18.5" fill="#dcdcdc">4</text>
<polygon points="1554.8,309.5 1566.2,314.8 1554.8,320.1" fill="#c8c8c8"/>
<g stroke="#0cb68e" fill="none" stroke-linecap="round">
<path d="M1596,303.2 L1596,308 M1590.1,309 L1595.6,309 M1606,319.5 L1606,325 M1606.1,318.6 L1612,318.6" stroke-width="6"/>
<path d="M1595.1,308.2 L1606.8,319.4" stroke-width="4.9" stroke-linecap="butt"/>
</g>
<text class="gt" x="1628.9" y="323.6" font-size="23.4" fill="#d4d4d4" textLength="205.7" lengthAdjust="spacingAndGlyphs">Avatar_RightUpLeg</text>
<clipPath id="cm6"><rect x="1900.5" y="310" width="40" height="24"/></clipPath>
<g stroke="#0cb68e" fill="none" stroke-linecap="round">
<path d="M1887.5,303.2 L1887.5,308 M1881.6,309 L1887.1,309 M1897.5,319.5 L1897.5,325 M1897.6,318.6 L1903.5,318.6" stroke-width="6"/>
<path d="M1886.6,308.2 L1898.3,319.4" stroke-width="4.9" stroke-linecap="butt"/>
</g>
<g stroke="#21503f" fill="none" stroke-linecap="round" clip-path="url(#cm6)">
<path d="M1887.5,303.2 L1887.5,308 M1881.6,309 L1887.1,309 M1897.5,319.5 L1897.5,325 M1897.6,318.6 L1903.5,318.6" stroke-width="6"/>
<path d="M1886.6,308.2 L1898.3,319.4" stroke-width="4.9" stroke-linecap="butt"/>
</g>
<text x="1906.4" y="329.8" font-size="18.5" fill="#dcdcdc">4</text>
<polygon points="1554.3,350 1565.8,350 1560.05,361.6" fill="#c8c8c8"/>
<g stroke="#0cb68e" fill="none" stroke-linecap="round">
<path d="M1596,343.2 L1596,348 M1590.1,349 L1595.6,349 M1606,359.5 L1606,365 M1606.1,358.6 L1612,358.6" stroke-width="6"/>
<path d="M1595.1,348.2 L1606.8,359.4" stroke-width="4.9" stroke-linecap="butt"/>
</g>
<text class="gt" x="1628.9" y="363.6" font-size="23.4" fill="#d4d4d4" textLength="141.2" lengthAdjust="spacingAndGlyphs">Avatar_Spine</text>
<polygon points="1594.3,390 1605.8,390 1600.05,401.6" fill="#c8c8c8"/>
<g stroke="#0cb68e" fill="none" stroke-linecap="round">
<path d="M1636,383.2 L1636,388 M1630.1,389 L1635.6,389 M1646,399.5 L1646,405 M1646.1,398.6 L1652,398.6" stroke-width="6"/>
<path d="M1635.1,388.2 L1646.8,399.4" stroke-width="4.9" stroke-linecap="butt"/>
</g>
<text class="gt" x="1668.9" y="403.6" font-size="23.4" fill="#d4d4d4" textLength="153.3" lengthAdjust="spacingAndGlyphs">Avatar_Spine1</text>
<polygon points="1634.3,430 1645.8,430 1640.05,441.6" fill="#c8c8c8"/>
<g stroke="#0cb68e" fill="none" stroke-linecap="round">
<path d="M1676,423.2 L1676,428 M1670.1,429 L1675.6,429 M1686,439.5 L1686,445 M1686.1,438.6 L1692,438.6" stroke-width="6"/>
<path d="M1675.1,428.2 L1686.8,439.4" stroke-width="4.9" stroke-linecap="butt"/>
</g>
<text class="gt" x="1708.9" y="443.6" font-size="23.4" fill="#d4d4d4" textLength="154.1" lengthAdjust="spacingAndGlyphs">Avatar_Spine2</text>
<polygon points="1674.8,469.5 1686.2,474.8 1674.8,480.1" fill="#c8c8c8"/>
<g stroke="#0cb68e" fill="none" stroke-linecap="round">
<path d="M1716,463.2 L1716,468 M1710.1,469 L1715.6,469 M1726,479.5 L1726,485 M1726.1,478.6 L1732,478.6" stroke-width="6"/>
<path d="M1715.1,468.2 L1726.8,479.4" stroke-width="4.9" stroke-linecap="butt"/>
</g>
<text class="gt" x="1748.9" y="483.6" font-size="23.4" fill="#d4d4d4" textLength="216.1" lengthAdjust="spacingAndGlyphs">Avatar_LeftShoulder</text>
<clipPath id="cm10"><rect x="2023" y="470" width="40" height="24"/></clipPath>
<g stroke="#0cb68e" fill="none" stroke-linecap="round">
<path d="M2018.8,463.2 L2018.8,468 M2012.9,469 L2018.4,469 M2028.8,479.5 L2028.8,485 M2028.9,478.6 L2034.8,478.6" stroke-width="6"/>
<path d="M2017.9,468.2 L2029.6,479.4" stroke-width="4.9" stroke-linecap="butt"/>
</g>
<g stroke="#21503f" fill="none" stroke-linecap="round" clip-path="url(#cm10)">
<path d="M2018.8,463.2 L2018.8,468 M2012.9,469 L2018.4,469 M2028.8,479.5 L2028.8,485 M2028.9,478.6 L2034.8,478.6" stroke-width="6"/>
<path d="M2017.9,468.2 L2029.6,479.4" stroke-width="4.9" stroke-linecap="butt"/>
</g>
<text x="2026.8" y="489.8" font-size="18.5" fill="#dcdcdc">28</text>
<polygon points="1674.8,509.5 1686.2,514.8 1674.8,520.1" fill="#c8c8c8"/>
<g stroke="#0cb68e" fill="none" stroke-linecap="round">
<path d="M1716,503.2 L1716,508 M1710.1,509 L1715.6,509 M1726,519.5 L1726,525 M1726.1,518.6 L1732,518.6" stroke-width="6"/>
<path d="M1715.1,508.2 L1726.8,519.4" stroke-width="4.9" stroke-linecap="butt"/>
</g>
<text class="gt" x="1748.9" y="523.6" font-size="23.4" fill="#d4d4d4" textLength="231.4" lengthAdjust="spacingAndGlyphs">Avatar_RightShoulder</text>
<clipPath id="cm11"><rect x="2038.3" y="510" width="40" height="24"/></clipPath>
<g stroke="#0cb68e" fill="none" stroke-linecap="round">
<path d="M2034.1,503.2 L2034.1,508 M2028.2,509 L2033.7,509 M2044.1,519.5 L2044.1,525 M2044.2,518.6 L2050.1,518.6" stroke-width="6"/>
<path d="M2033.2,508.2 L2044.9,519.4" stroke-width="4.9" stroke-linecap="butt"/>
</g>
<g stroke="#21503f" fill="none" stroke-linecap="round" clip-path="url(#cm11)">
<path d="M2034.1,503.2 L2034.1,508 M2028.2,509 L2033.7,509 M2044.1,519.5 L2044.1,525 M2044.2,518.6 L2050.1,518.6" stroke-width="6"/>
<path d="M2033.2,508.2 L2044.9,519.4" stroke-width="4.9" stroke-linecap="butt"/>
</g>
<text x="2042.1" y="529.8" font-size="18.5" fill="#dcdcdc">28</text>
<polygon points="1674.3,550 1685.8,550 1680.05,561.6" fill="#c8c8c8"/>
<g stroke="#0cb68e" fill="none" stroke-linecap="round">
<path d="M1716,543.2 L1716,548 M1710.1,549 L1715.6,549 M1726,559.5 L1726,565 M1726.1,558.6 L1732,558.6" stroke-width="6"/>
<path d="M1715.1,548.2 L1726.8,559.4" stroke-width="4.9" stroke-linecap="butt"/>
</g>
<text class="gt" x="1748.9" y="563.6" font-size="23.4" fill="#d4d4d4" textLength="136.7" lengthAdjust="spacingAndGlyphs">Avatar_Neck</text>
<polygon points="1714.3,590 1725.8,590 1720.05,601.6" fill="#c8c8c8"/>
<g stroke="#0cb68e" fill="none" stroke-linecap="round">
<path d="M1756,583.2 L1756,588 M1750.1,589 L1755.6,589 M1766,599.5 L1766,605 M1766.1,598.6 L1772,598.6" stroke-width="6"/>
<path d="M1755.1,588.2 L1766.8,599.4" stroke-width="4.9" stroke-linecap="butt"/>
</g>
<text class="gt" x="1788.9" y="603.6" font-size="23.4" fill="#d4d4d4" textLength="137.8" lengthAdjust="spacingAndGlyphs">Avatar_Head</text>
<rect x="1781" y="619" width="39.5" height="33.3" rx="7" fill="#566c93" stroke="#6d82a6" stroke-width="1.2"/>
<g stroke="#16c29a" fill="none" stroke-linecap="round">
<path d="M1796,623.2 L1796,628 M1790.1,629 L1795.6,629 M1806,639.5 L1806,645 M1806.1,638.6 L1812,638.6" stroke-width="6"/>
<path d="M1795.1,628.2 L1806.8,639.4" stroke-width="4.9" stroke-linecap="butt"/>
</g>
<text class="gt" x="1829.1" y="643.8" font-size="23.4" fill="#d4d4d4" textLength="187.9" lengthAdjust="spacingAndGlyphs">Avatar_Head_end</text>
<g stroke="#0cb68e" stroke-width="2.2" fill="none" stroke-linecap="round" stroke-linejoin="miter"><path d="M1507.6,660.8 L1513.8,667.1 L1518.3,667.4 M1522,676.5 V667.5 H1528 L1534,673.2"/>
<path d="M1522,676.5 Q1512.5,675 1512,687.4 M1522,676.5 Q1527,684.5 1534,685"/></g>
<circle cx="1520" cy="662.9" r="3.1" fill="#0cb68e"/>
<text class="gt" x="1549" y="683.6" font-size="23.4" fill="#d4d4d4" textLength="51.1" lengthAdjust="spacingAndGlyphs">Pose</text>
<rect x="1397.4" y="7.5" width="62.8" height="39.5" rx="7.5" fill="#282828" stroke="#414141" stroke-width="1.6"/>
<rect x="1407" y="13" width="10" height="5.8" rx="1" fill="#e6e6e6"/>
<path d="M1411.4,19 V37.8 H1419 M1411.4,28 H1419" stroke="#b0b0b0" stroke-width="1.5" fill="none"/>
<rect x="1421" y="25" width="14" height="5.8" rx="1" fill="#e6e6e6"/><rect x="1421" y="34.9" width="14" height="6" rx="1" fill="#e6e6e6"/>
<path d="M1441,25.8 L1447.5,32.2 L1454,25.8" stroke="#e6e6e6" stroke-width="2.4" fill="none"/>
<rect x="1471" y="7.5" width="63.7" height="39.5" rx="7.5" fill="#282828" stroke="#414141" stroke-width="1.6"/>
<path d="M1481.5,21 V40.5 H1500.5 M1485.5,17.5 V36.5 H1505" stroke="#b8b8b8" stroke-width="1.6" fill="none"/>
<rect x="1489.8" y="13.8" width="18.6" height="18.2" fill="none" stroke="#e6e6e6" stroke-width="1.7"/>
<polygon points="1491,31.2 1495.5,20 1499.5,27 1501,25 1503.5,31.2" fill="#e6e6e6"/><circle cx="1503.5" cy="19" r="1.8" fill="#e6e6e6"/>
<path d="M1515,25.8 L1521.5,32.2 L1528,25.8" stroke="#e6e6e6" stroke-width="2.4" fill="none"/>
<rect x="1670.4" y="7.5" width="231.8" height="39" rx="7.5" fill="#1d1d1d" stroke="#3c3c3c" stroke-width="1.6"/>
<circle cx="1698" cy="23" r="8.9" fill="none" stroke="#e8e8e8" stroke-width="2"/>
<line x1="1681.2" y1="39.8" x2="1691.8" y2="29.2" stroke="#e8e8e8" stroke-width="2.1" stroke-linecap="round"/>
<rect x="2106.8" y="7.5" width="62.7" height="39" rx="7.5" fill="#282828" stroke="#414141" stroke-width="1.6"/>
<path d="M2112.4,13.4 H2139.6 L2128.6,25.9 V34 L2123.6,39.6 V25.9 Z" fill="none" stroke="#ececec" stroke-width="1.8" stroke-linejoin="miter"/>
<path d="M2150.3,25.4 L2156.6,32 L2162.8,25.4" stroke="#e6e6e6" stroke-width="2.2" fill="none"/>
<rect x="2181.8" y="8.6" width="36.6" height="36.8" rx="6.5" fill="#555555" stroke="#3a3a3a" stroke-width="1.6"/>
<path d="M2187.3,18.2 H2197.5 V23.4 H2187.3 Z M2189.6,24.6 V39.6 H2206.6 V29.2" stroke="#b8b8b8" stroke-width="1.8" fill="none"/>
<rect x="2194" y="29.8" width="8" height="3" rx="1.5" fill="#b8b8b8"/>
<circle cx="2207" cy="20" r="7" fill="#e6e6e6"/><path d="M2202.3,20 H2211.7 M2207,15.3 V24.7" stroke="#4a4a4a" stroke-width="1.6"/>
<rect x="1244" y="631" width="405" height="15" fill="#ea4124"/>
<polygon points="1648,600.7 1722.5,638.3 1648,675.3" fill="#ea4124"/>
<path d="M1745,605 H2051.2 V670 H1745 Z M1760.1,620.2 V654.8 H2036 V620.2 Z" fill="#ea4124" fill-rule="evenodd"/>
</svg></body></html>
